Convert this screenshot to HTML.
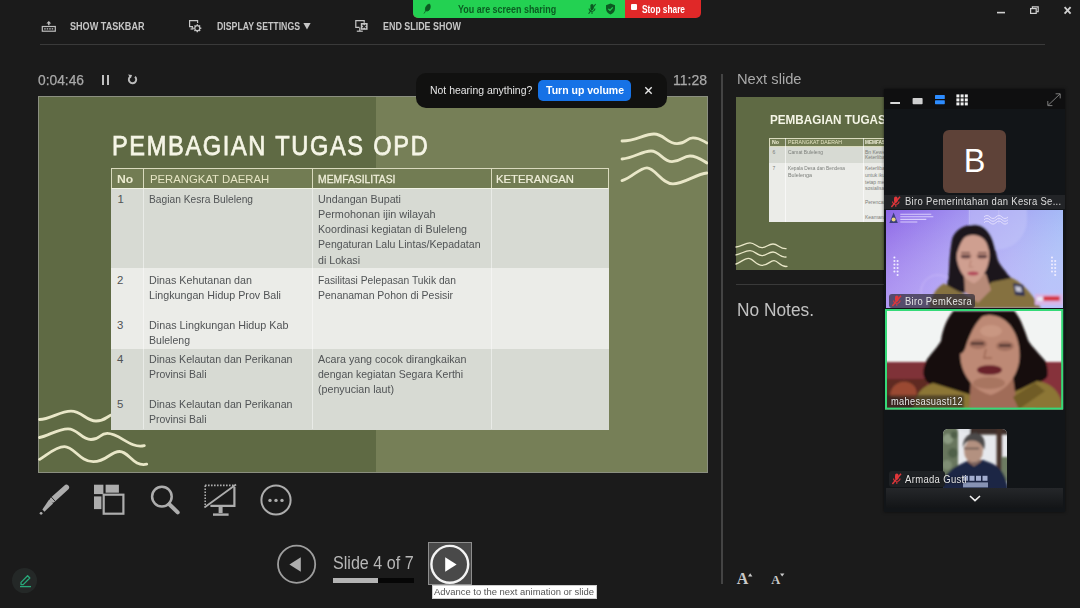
<!DOCTYPE html>
<html lang="id">
<head>
<meta charset="utf-8">
<title>Presenter View</title>
<style>
*{box-sizing:border-box;margin:0;padding:0}
html,body{width:1080px;height:608px;overflow:hidden;background:#1b1b1b}
body{position:relative;font-family:"Liberation Sans",sans-serif;color:#c8c8c8}
.abs{position:absolute}
.t{position:absolute;white-space:nowrap;transform-origin:0 50%}
.tb{font-weight:bold;color:#c6c6c6}
.hr{position:absolute;background:#3a3a3a;height:1px}
.c{color:#505355}
.h{color:#ecebd0}
.n{color:#fff}
</style>
</head>
<body>

<!-- top toolbar -->
<svg class="abs" style="left:40px;top:19px" width="18" height="14" viewBox="40 19 18 14"><rect x="42.300" y="26.500" width="13" height="4.700" fill="none" stroke="#c0c0c0" stroke-width="1.200"/><g fill="#c0c0c0"><rect x="44.200" y="28.200" width="1.500" height="1.300"/><rect x="46.700" y="28.200" width="1.500" height="1.300"/><rect x="49.200" y="28.200" width="1.500" height="1.300"/><rect x="51.700" y="28.200" width="1.500" height="1.300"/><path d="M48.800 21l2.400 2.400h-1.700v1.800h-1.400v-1.800h-1.700z"/></g></svg>
<div class="t" id="t1" style="left:70px;top:18.5px;font-size:11px;line-height:14px;font-weight:bold;color:#c6c6c6;transform:scaleX(0.8256);">SHOW TASKBAR</div>
<svg class="abs" style="left:188px;top:18px" width="14" height="15" viewBox="0 0 14 15"><g fill="none" stroke="#c6c6c6" stroke-width="1.2"><path d="M5 8.600H1.600V2.700h8v2.300"/><path d="M2.500 11h3"/><path d="M4.300 8.600v2.200"/><circle cx="9.300" cy="10.200" r="2.500"/></g><g stroke="#c6c6c6" stroke-width="1.400"><path d="M9.300 6.200v1.200M9.300 13v1.200M5.300 10.200h1.200M12.100 10.200h1.200M6.500 7.400l.9.9M11.200 12.100l.9.9M12.100 7.400l-.9.9M7.400 12.100l-.9.9"/></g></svg>
<div class="t" id="t2" style="left:216.8px;top:18.5px;font-size:11px;line-height:14px;font-weight:bold;color:#c6c6c6;transform:scaleX(0.7940);">DISPLAY SETTINGS</div>
<svg class="abs" style="left:303px;top:22px" width="8" height="8" viewBox="0 0 8 8"><path d="M.4 1h7.200L4 7.400z" fill="#c6c6c6"/></svg>
<svg class="abs" style="left:354px;top:18px" width="15" height="15" viewBox="0 0 15 15"><g fill="none" stroke="#c6c6c6" stroke-width="1.2"><path d="M5.400 9.400H1.800V2.700h8.400v2"/><path d="M2.800 13.200h6"/><path d="M5.800 9.400v3.600"/></g><rect x="6.800" y="5" width="6.800" height="6.800" fill="#c6c6c6"/><path d="M8.500 6.700l3.400 3.400M11.900 6.700l-3.400 3.400" stroke="#1b1b1b" stroke-width="1.300"/></svg>
<div class="t" id="t3" style="left:383px;top:18.5px;font-size:11px;line-height:14px;font-weight:bold;color:#c6c6c6;transform:scaleX(0.8108);">END SLIDE SHOW</div>
<div class="hr" style="left:40px;top:44px;width:1005px"></div>

<!-- window controls -->
<svg class="abs" style="left:990px;top:0" width="90" height="22" viewBox="0 0 90 22"><g stroke="#d0d0d0" fill="none"><path d="M7 12.600h8" stroke-width="1.600"/><rect x="40.600" y="8.600" width="5.600" height="4.800" stroke-width="1.200"/><path d="M42.400 8.400V6.800h5.800v4.800h-1.800" stroke-width="1.200"/><path d="M74.600 7.200l6 6.400M80.600 7.200l-6 6.400" stroke-width="1.800"/></g></svg>

<!-- zoom share bar -->
<div class="abs" style="left:413px;top:0;width:288px;height:17.600px;background:#e02828;border-radius:0 0 5px 5px;overflow:hidden">
  <div class="abs" style="left:0;top:0;width:212px;height:18px;background:#23d152"></div>
  <svg class="abs" style="left:10px;top:3px" width="10" height="12" viewBox="0 0 10 12"><path d="M6.500 1C4 1.500 2 4 2.400 7.200 3.600 8.600 6 8 6.800 6 7.600 4 7.400 2.400 6.500 1zM1 10.500L3.200 7" fill="#0c5a22" stroke="#0c5a22" stroke-width=".8"/></svg>
  <svg class="abs" style="left:174px;top:3px" width="10" height="12" viewBox="0 0 10 12"><g fill="#0c5a22"><rect x="3.400" y="1" width="3.200" height="6" rx="1.600"/><path d="M1.600 5.600c0 4.400 6.800 4.400 6.800 0h-1c0 3.200-4.800 3.200-4.800 0zM4.500 9h1v2h-1z"/></g><path d="M8.600 1L1.600 10.800" stroke="#0c5a22" stroke-width="1.100"/></svg>
  <svg class="abs" style="left:192px;top:3px" width="11" height="12" viewBox="0 0 11 12"><path d="M5.500.6L1 2.200v3.600c0 2.600 1.800 4.600 4.500 5.600C8.200 10.400 10 8.400 10 5.800V2.200z" fill="#0c5a22"/><path d="M3.400 5.800l1.600 1.600 2.800-3" stroke="#23d152" stroke-width="1.200" fill="none"/></svg>
  <div class="abs" style="left:218px;top:4px;width:6px;height:6px;background:#fff;border-radius:1px"></div>
</div>
<div class="t" id="ys" style="left:457.8px;top:2.5px;font-size:10.5px;line-height:13px;font-weight:bold;color:#0b5c22;transform:scaleX(0.8513);">You are screen sharing</div>
<div class="t" id="ss" style="left:642.4px;top:2.5px;font-size:10.5px;line-height:13px;font-weight:bold;color:#fff;transform:scaleX(0.7924);">Stop share</div>

<!-- timer row -->
<div class="t" id="timer" style="left:38px;top:71px;font-size:14.5px;line-height:18px;color:#a9a9a9;-webkit-text-stroke:.25px #a9a9a9;transform:scaleX(0.9506);">0:04:46</div>
<div class="abs" style="left:102px;top:75px;width:2.400px;height:10px;background:#c0c0c0"></div>
<div class="abs" style="left:106.600px;top:75px;width:2.400px;height:10px;background:#c0c0c0"></div>
<svg class="abs" style="left:126px;top:73px" width="13" height="13" viewBox="0 0 13 13"><path d="M9 3.800A3.700 3.700 0 1 1 4.300 3.600" fill="none" stroke="#bcbcbc" stroke-width="1.900"/><path d="M2 1.600L6 2 4.800 5.600z" fill="#bcbcbc"/></svg>
<div class="t" id="clock" style="left:673px;top:71px;font-size:14.5px;line-height:18px;color:#a9a9a9;-webkit-text-stroke:.25px #a9a9a9;transform:scaleX(0.9654);">11:28</div>

<!-- main slide -->
<div class="abs" style="left:37.500px;top:96px;width:670.500px;height:377px;background:#5f6a44;border:1px solid #8b8f80"></div>
<div class="abs" style="left:376px;top:97px;width:331px;height:375px;background:#767f57"></div>
<svg class="abs" style="left:38px;top:96px" width="670" height="377" viewBox="38 96 670 377"><g fill="none" stroke="#e9e7c8" stroke-width="2.800" stroke-linecap="round">
  <path d="M622 141C636 141 644 134 654 134S667 143.600 677 143.600 686 137.800 693 137.800 703 141 707 143"/>
  <path d="M622 159C634 158 642 151 651 151S663 161.700 672 161.700 683 156 690 156 702 160 707 163"/>
  <path d="M622 180.600C632 178 639 167.800 647 167.800S662 183.900 673 183.900 696 174 707 173"/>
  <path d="M39.500 419.500C50 419.500 60 411.200 71 411.200S86 421 96 421 106 416 114 414"/>
  <path d="M39.500 437.500C48 436 58 428.800 68 428.800S81 439.500 91 439.500 99 433.400 107.300 433.400C120 433.400 130 449 144.300 445.600"/>
  <path d="M39.500 459.400C46 456 55 446.600 64.500 446.600S80 461.700 93.300 461.700 110 451.500 119.600 451.500 133 467 146.700 464.200"/>
</g></svg>
<div class="t" id="title" style="left:111.8px;top:129.3px;font-size:27.2px;line-height:34px;color:#f5f5e6;-webkit-text-stroke:0.75px #f5f5e6;letter-spacing:1.9px;word-spacing:0.5px;transform:scaleX(0.8671);">PEMBAGIAN TUGAS OPD</div>

<!-- table -->
<div class="abs" style="left:111px;top:168px;width:498px;height:20px;background:#727c53"></div>
<div class="abs" style="left:111px;top:188px;width:498px;height:80px;background:#d7dad3"></div>
<div class="abs" style="left:111px;top:268px;width:498px;height:81px;background:#ebece8"></div>
<div class="abs" style="left:111px;top:349px;width:498px;height:80.500px;background:#d7dad3"></div>
<div class="abs" style="left:143.300px;top:188px;width:1px;height:241px;background:rgba(255,255,255,.45)"></div>
<div class="abs" style="left:312px;top:188px;width:1px;height:241px;background:rgba(255,255,255,.45)"></div>
<div class="abs" style="left:490.500px;top:188px;width:1px;height:241px;background:rgba(255,255,255,.45)"></div>
<div class="abs" style="left:111px;top:168px;width:498px;height:20.500px;border:1px solid #d9dabd;border-bottom:1.500px solid #f2f3e6"></div>
<div class="abs" style="left:143.300px;top:168px;width:1px;height:20px;background:#d9dabd"></div>
<div class="abs" style="left:312px;top:168px;width:1px;height:20px;background:#d9dabd"></div>
<div class="abs" style="left:490.500px;top:168px;width:1px;height:20px;background:#d9dabd"></div>
<div class="t" id="h1" style="left:116.7px;top:171.7px;font-size:11px;line-height:14px;font-weight:bold;color:#ecebd0;transform:scaleX(1.1042);">No</div>
<div class="t" id="h2" style="left:149.5px;top:171.7px;font-size:11px;line-height:14px;color:#e6e5c4;transform:scaleX(1.0299);">PERANGKAT DAERAH</div>
<div class="t" id="h3" style="left:318px;top:171.7px;font-size:11px;line-height:14px;color:#f0efda;-webkit-text-stroke:0.3px #f0efda;transform:scaleX(0.9415);">MEMFASILITASI</div>
<div class="t" id="h4" style="left:496.2px;top:171.7px;font-size:11px;line-height:14px;color:#f0efda;-webkit-text-stroke:0.2px #f0efda;transform:scaleX(1.0291);">KETERANGAN</div>
<div class="t" id="n1" style="left:117.4px;top:192.1px;font-size:11.4px;line-height:14px;color:#505355;">1</div>
<div class="t" id="n2" style="left:117px;top:272.6px;font-size:11.4px;line-height:14px;color:#505355;">2</div>
<div class="t" id="n3" style="left:117px;top:317.9px;font-size:11.4px;line-height:14px;color:#505355;">3</div>
<div class="t" id="n4" style="left:117px;top:351.9px;font-size:11.4px;line-height:14px;color:#505355;">4</div>
<div class="t" id="n5" style="left:117px;top:397.2px;font-size:11.4px;line-height:14px;color:#505355;">5</div>
<div class="t" id="a1" style="left:149px;top:192.1px;font-size:11.4px;line-height:14px;color:#505355;transform:scaleX(0.8974);">Bagian Kesra Buleleng</div>
<div class="t" id="a2" style="left:149px;top:272.6px;font-size:11.4px;line-height:14px;color:#505355;transform:scaleX(0.9400);">Dinas Kehutanan dan</div>
<div class="t" id="a3" style="left:149px;top:287.7px;font-size:11.4px;line-height:14px;color:#505355;transform:scaleX(0.9390);">Lingkungan Hidup Prov Bali</div>
<div class="t" id="a4" style="left:149px;top:317.9px;font-size:11.4px;line-height:14px;color:#505355;transform:scaleX(0.9454);">Dinas Lingkungan Hidup Kab</div>
<div class="t" id="a5" style="left:149px;top:333px;font-size:11.4px;line-height:14px;color:#505355;transform:scaleX(0.9246);">Buleleng</div>
<div class="t" id="a6" style="left:149px;top:351.9px;font-size:11.4px;line-height:14px;color:#505355;transform:scaleX(0.9325);">Dinas Kelautan dan Perikanan</div>
<div class="t" id="a7" style="left:149px;top:367px;font-size:11.4px;line-height:14px;color:#505355;transform:scaleX(0.9175);">Provinsi Bali</div>
<div class="t" id="a8" style="left:149px;top:397.2px;font-size:11.4px;line-height:14px;color:#505355;transform:scaleX(0.9325);">Dinas Kelautan dan Perikanan</div>
<div class="t" id="a9" style="left:149px;top:412.3px;font-size:11.4px;line-height:14px;color:#505355;transform:scaleX(0.9175);">Provinsi Bali</div>
<div class="t" id="b1" style="left:317.5px;top:192.1px;font-size:11.4px;line-height:14px;color:#505355;transform:scaleX(0.9427);">Undangan Bupati</div>
<div class="t" id="b2" style="left:317.5px;top:207.2px;font-size:11.4px;line-height:14px;color:#505355;transform:scaleX(0.9517);">Permohonan ijin wilayah</div>
<div class="t" id="b3" style="left:317.5px;top:222.3px;font-size:11.4px;line-height:14px;color:#505355;transform:scaleX(0.9336);">Koordinasi kegiatan di Buleleng</div>
<div class="t" id="b4" style="left:317.5px;top:237.4px;font-size:11.4px;line-height:14px;color:#505355;transform:scaleX(0.9263);">Pengaturan Lalu Lintas/Kepadatan</div>
<div class="t" id="b5" style="left:317.5px;top:252.5px;font-size:11.4px;line-height:14px;color:#505355;transform:scaleX(0.9340);">di Lokasi</div>
<div class="t" id="b6" style="left:317.5px;top:272.6px;font-size:11.4px;line-height:14px;color:#505355;transform:scaleX(0.9006);">Fasilitasi Pelepasan Tukik dan</div>
<div class="t" id="b7" style="left:317.5px;top:287.7px;font-size:11.4px;line-height:14px;color:#505355;transform:scaleX(0.9190);">Penanaman Pohon di Pesisir</div>
<div class="t" id="b8" style="left:317.5px;top:351.9px;font-size:11.4px;line-height:14px;color:#505355;transform:scaleX(0.9381);">Acara yang cocok dirangkaikan</div>
<div class="t" id="b9" style="left:317.5px;top:367px;font-size:11.4px;line-height:14px;color:#505355;transform:scaleX(0.9232);">dengan kegiatan Segara Kerthi</div>
<div class="t" id="b10" style="left:317.5px;top:382.1px;font-size:11.4px;line-height:14px;color:#505355;transform:scaleX(0.9375);">(penyucian laut)</div>

<!-- toast -->
<div class="abs" style="left:416px;top:72.500px;width:251px;height:35.500px;background:#111110;border-radius:10px"></div>
<div class="t" id="to1" style="left:429.6px;top:83.2px;font-size:11px;line-height:14px;color:#e6e6e6;transform:scaleX(0.9504);">Not hearing anything?</div>
<div class="abs" style="left:538.400px;top:80px;width:92.600px;height:20.700px;background:#1672e6;border-radius:5px"></div>
<div class="t" id="to2" style="left:545.5px;top:83.7px;font-size:10.5px;line-height:13px;font-weight:bold;color:#fff;transform:scaleX(1.0002);">Turn up volume</div>
<svg class="abs" style="left:644px;top:86px" width="9" height="9" viewBox="0 0 9 9"><path d="M1.300 1.300l6.400 6.400M7.700 1.300L1.300 7.700" stroke="#e8e8e8" stroke-width="1.400"/></svg>

<!-- right column -->
<div class="abs" style="left:721px;top:74px;width:1.500px;height:510px;background:#444"></div>
<div class="t" id="nx" style="left:736.5px;top:70px;font-size:14.5px;line-height:18px;color:#a9a9a9;transform:scaleX(1.0130);">Next slide</div>
<div class="abs" style="left:735.600px;top:97px;width:307px;height:172.700px;background:#5f6a44"></div>
<svg class="abs" style="left:735px;top:238px" width="54" height="32" viewBox="735 238 54 32"><g fill="none" stroke="#e9e7c8" stroke-width="1.300" stroke-linecap="round">
  <path d="M736 247C741 247 745 242.800 750 242.800S757 247.600 762 247.600 768 244 773 244 780 249 786 248.600"/>
  <path d="M736 254.800C741 254 745 250.600 750 250.600S757 255.600 762 255.600 768 252 773 252 780 258 786 257"/>
  <path d="M736 264C740 263 744 258.400 748.500 258.400S756 265.400 762 265.400 770 260.600 774 260.600 781 267.600 787 266.400"/>
</g></svg>
<div class="t" id="nt" style="left:770px;top:112.5px;font-size:12.3px;line-height:15px;color:#f5f5e6;font-weight:bold;transform:scaleX(0.9521);">PEMBAGIAN TUGAS OPD</div>
<div class="abs" style="left:769.400px;top:137.500px;width:229px;height:9.700px;background:#727c53;border:.5px solid #d9dabd"></div>
<div class="abs" style="left:769.400px;top:147.200px;width:229px;height:16.200px;background:#d7dad3"></div>
<div class="abs" style="left:769.400px;top:163.400px;width:229px;height:58.500px;background:#ebece8"></div>
<div class="abs" style="left:784.500px;top:137.500px;width:.6px;height:84.400px;background:rgba(255,255,255,.6)"></div>
<div class="abs" style="left:862.600px;top:137.500px;width:.6px;height:84.400px;background:rgba(255,255,255,.6)"></div>
<div class="t" id="m1" style="left:772px;top:139.4px;font-size:5px;line-height:6px;color:#ecebd0;font-weight:bold;transform:scaleX(1.0492);">No</div>
<div class="t" id="m2" style="left:787.5px;top:139.4px;font-size:5px;line-height:6px;color:#e6e5c4;transform:scaleX(1.0264);">PERANGKAT DAERAH</div>
<div class="t" id="m3" style="left:865px;top:139.4px;font-size:5px;line-height:6px;color:#f0efda;font-weight:bold;transform:scaleX(0.9412);">MEMFASILITASI</div>
<div class="t" id="m4" style="left:772.5px;top:149.3px;font-size:5px;line-height:6px;color:#7b7e7a;">6</div>
<div class="t" id="m5" style="left:787.5px;top:149.3px;font-size:5px;line-height:6px;color:#7b7e7a;transform:scaleX(0.9838);">Camat Buleleng</div>
<div class="t" id="m6" style="left:865px;top:149px;font-size:5px;line-height:6px;color:#7b7e7a;">Bn Kewenangan wilayah</div>
<div class="t" id="m7" style="left:865px;top:153.6px;font-size:5px;line-height:6px;color:#7b7e7a;">Keterlibatan masyarakat</div>
<div class="t" id="m8" style="left:772.5px;top:165px;font-size:5px;line-height:6px;color:#7b7e7a;">7</div>
<div class="t" id="m9" style="left:787.5px;top:165px;font-size:5px;line-height:6px;color:#7b7e7a;transform:scaleX(0.9580);">Kepala Desa dan Bendesa</div>
<div class="t" id="m10" style="left:787.5px;top:171.5px;font-size:5px;line-height:6px;color:#7b7e7a;transform:scaleX(1.0787);">Bulelenga</div>
<div class="t" id="m11" style="left:865px;top:165px;font-size:5px;line-height:6px;color:#7b7e7a;">Keterlibatan masyarakat</div>
<div class="t" id="m12" style="left:865px;top:171.6px;font-size:5px;line-height:6px;color:#7b7e7a;">untuk ikut serta dalam</div>
<div class="t" id="m13" style="left:865px;top:178.5px;font-size:5px;line-height:6px;color:#7b7e7a;">tetap menjaga kebersihan</div>
<div class="t" id="m14" style="left:865px;top:185.4px;font-size:5px;line-height:6px;color:#7b7e7a;">sosialisasi ke warga</div>
<div class="t" id="m15" style="left:865px;top:198.6px;font-size:5px;line-height:6px;color:#7b7e7a;">Perencanaan lokasi</div>
<div class="t" id="m16" style="left:865px;top:213.6px;font-size:5px;line-height:6px;color:#7b7e7a;">Keamanan</div>
<div class="hr" style="left:735.600px;top:284px;width:309px"></div>
<div class="t" id="nn" style="left:736.5px;top:298.5px;font-size:18px;line-height:22px;color:#c2c2c2;transform:scaleX(0.9619);">No Notes.</div>
<div class="t" id="fa" style="left:736.7px;top:568.8px;font-size:16px;line-height:20px;font-family:'Liberation Serif',serif;font-weight:bold;color:#c9c9c9;">A</div>
<svg class="abs" style="left:748px;top:572.800px" width="5" height="4" viewBox="0 0 5 4"><path d="M0 3.500L2.200.3 4.400 3.500z" fill="#c9c9c9"/></svg>
<div class="t" id="fb" style="left:771.3px;top:571.5px;font-size:12.5px;line-height:16px;font-family:'Liberation Serif',serif;font-weight:bold;color:#c9c9c9;">A</div>
<svg class="abs" style="left:780px;top:573px" width="5" height="4" viewBox="0 0 5 4"><path d="M0 .4h4.400L2.200 3.600z" fill="#c9c9c9"/></svg>

<!-- bottom tools -->
<svg class="abs" style="left:36px;top:482px" width="38" height="36" viewBox="36 482 38 36">
  <path d="M66.300 487.500L52.800 499.700" stroke="#adadad" stroke-width="5.600" stroke-linecap="round" fill="none"/>
  <path d="M52.800 499.700L50.700 497.400" stroke="#adadad" stroke-width="0" fill="none"/>
  <path d="M53.100 503.400L49.300 499.200 42.400 509.500 44.400 511.700z" fill="#adadad"/>
  <path d="M55.200 501.300L50.700 496.400" stroke="#1b1b1b" stroke-width=".9"/>
  <circle cx="41.100" cy="513.300" r="1.400" fill="#adadad"/>
</svg>
<svg class="abs" style="left:92px;top:483px" width="34" height="34" viewBox="92 483 34 34">
  <g fill="#adadad"><rect x="94" y="484.700" width="9.400" height="9.400"/><rect x="105.600" y="484.700" width="13.300" height="8"/><rect x="94" y="496.400" width="7.400" height="12.700"/></g>
  <rect x="103.700" y="494.700" width="19.700" height="19" fill="#1b1b1b" stroke="#adadad" stroke-width="2.200"/>
</svg>
<svg class="abs" style="left:148px;top:484px" width="34" height="34" viewBox="148 484 34 34">
  <circle cx="161.900" cy="496.600" r="9.800" fill="none" stroke="#adadad" stroke-width="2.500"/>
  <path d="M169.300 504.200l8.400 8.200" stroke="#adadad" stroke-width="4" stroke-linecap="round"/>
</svg>
<svg class="abs" style="left:202px;top:482px" width="36" height="36" viewBox="202 482 36 36">
  <g stroke="#adadad" fill="none"><path d="M205 485.400h30" stroke-width="1.600" stroke-dasharray="1.600 1.400"/><path d="M205.200 485.400v20" stroke-width="1.600" stroke-dasharray="1.600 1.400"/>
  <path d="M234.400 487v18.800h-24" stroke-width="2.200"/><path d="M236 484.600L204.400 507.400" stroke-width="1.800"/><path d="M220.600 506v7" stroke-width="4"/><path d="M213 514.600h15.600" stroke-width="2.400"/></g>
</svg>
<svg class="abs" style="left:258px;top:482px" width="36" height="36" viewBox="258 482 36 36">
  <circle cx="276" cy="500" r="14.600" fill="none" stroke="#adadad" stroke-width="2"/>
  <g fill="#adadad"><circle cx="270" cy="500.400" r="1.700"/><circle cx="276" cy="500.400" r="1.700"/><circle cx="282" cy="500.400" r="1.700"/></g>
</svg>

<!-- slide navigation -->
<svg class="abs" style="left:274px;top:542px" width="46" height="46" viewBox="274 542 46 46">
  <circle cx="296.600" cy="564.300" r="18.600" fill="none" stroke="#9e9e9e" stroke-width="1.800"/>
  <path d="M300.800 557.300v14.400l-11.400-7.200z" fill="#adadad"/>
</svg>
<div class="t" id="sl" style="left:332.7px;top:552px;font-size:17.6px;line-height:22px;color:#b8b8b8;transform:scaleX(0.9156);">Slide 4 of 7</div>
<div class="abs" style="left:332.700px;top:577.700px;width:81px;height:5.400px;background:#060606"></div>
<div class="abs" style="left:332.700px;top:577.700px;width:45.600px;height:5.400px;background:#b4b4b4"></div>
<div class="abs" style="left:427.700px;top:542.300px;width:44px;height:43px;background:#494949;border:1px solid #8e8e8e"></div>
<svg class="abs" style="left:428px;top:542px" width="46" height="46" viewBox="428 542 46 46">
  <circle cx="449.800" cy="564.300" r="18.400" fill="none" stroke="#f4f4f4" stroke-width="2.400"/>
  <path d="M445.200 557.300v14.400l11.400-7.200z" fill="#fff"/>
</svg>
<div class="abs" style="left:431.700px;top:585px;width:165.600px;height:14px;background:#fff;border:1px solid #cfcfcf"></div>
<div class="t" id="tip" style="left:434.2px;top:586.5px;font-size:9px;line-height:11px;color:#555;transform:scaleX(1.0485);">Advance to the next animation or slide</div>

<!-- annotate badge -->
<div class="abs" style="left:12.400px;top:568px;width:24.600px;height:24.600px;border-radius:12.300px;background:#242827"></div>
<svg class="abs" style="left:17.500px;top:572.600px" width="15" height="15" viewBox="0 0 15 15"><g fill="none" stroke="#28a97a" stroke-width="1.300" stroke-linejoin="round"><path d="M3 9.400L9.600 2.800l2.200 2.200L5.200 11.600H3z"/><path d="M2 13.600h11"/></g></svg>

<!-- zoom video panel -->
<div class="abs" style="left:883.500px;top:89px;width:181.500px;height:423px;background:#121518;box-shadow:0 0 3px rgba(0,0,0,.6)"></div>
<div class="abs" style="left:883.500px;top:89px;width:181.500px;height:20px;background:#0f0f10"></div>
<svg class="abs" style="left:884px;top:90px" width="181" height="19" viewBox="884 90 181 19">
  <rect x="890.300" y="102" width="9.700" height="2" fill="#d8d8d8"/>
  <rect x="912.600" y="98" width="10" height="6.200" rx=".8" fill="#cfcfcf"/>
  <rect x="935" y="95" width="9.800" height="4" rx=".6" fill="#2d8cff"/><rect x="935" y="100.200" width="9.800" height="4" rx=".6" fill="#2d8cff"/>
  <g fill="#f0f0f0"><rect x="956.400" y="94.400" width="3" height="3"/><rect x="960.600" y="94.400" width="3" height="3"/><rect x="964.800" y="94.400" width="3" height="3"/><rect x="956.400" y="98.400" width="3" height="3"/><rect x="960.600" y="98.400" width="3" height="3"/><rect x="964.800" y="98.400" width="3" height="3"/><rect x="956.400" y="102.400" width="3" height="3"/><rect x="960.600" y="102.400" width="3" height="3"/><rect x="964.800" y="102.400" width="3" height="3"/></g>
  <g stroke="#7c7c7c" stroke-width="1" fill="none"><path d="M1048 105.400L1060 94"/><path d="M1055.600 93.800h4.600v4.600"/><path d="M1052.400 105.600h-4.600V101"/></g>
</svg>
<!-- tile 1 -->
<div class="abs" style="left:943.200px;top:129.500px;width:63.200px;height:63px;background:#5e4238;border-radius:6px"></div>
<div class="t" id="av" style="left:963.7px;top:141.2px;font-size:32.5px;line-height:41px;color:#fff;">B</div>
<div class="abs" style="left:884px;top:194.600px;width:180.500px;height:14.400px;background:#222427"></div>
<svg class="abs" style="left:889px;top:195.500px" width="13" height="12" viewBox="0 0 13 12"><g fill="#e0363a"><rect x="5" y=".6" width="3.600" height="6.200" rx="1.800"/><path d="M3 5.400c0 4.600 7.600 4.600 7.600 0h-1.100c0 3.300-5.400 3.300-5.400 0zM6.200 9h1.200v1.800H6.200z"/></g><path d="M11 .8L2.400 11" stroke="#e0363a" stroke-width="1.400"/></svg>
<div class="t" id="nm1" style="left:904.5px;top:194.8px;font-size:10.4px;line-height:13px;color:#dedede;letter-spacing:.35px;transform:scaleX(0.9092);">Biro Pemerintahan dan Kesra Se...</div>

<!-- tile 2 -->
<svg class="abs" style="left:885.700px;top:210.400px" width="177.600" height="98" viewBox="0 0 177.600 98">
  <defs>
    <linearGradient id="g2" x1="0" y1="0" x2="1" y2="0.120"><stop offset="0" stop-color="#8c66e7"/><stop offset=".4" stop-color="#a08ff0"/><stop offset=".75" stop-color="#a8aaf4"/><stop offset="1" stop-color="#a5bbf7"/></linearGradient>
    <linearGradient id="g2b" x1="0" y1="0" x2="0" y2="1"><stop offset="0" stop-color="#fff" stop-opacity="0"/><stop offset="1" stop-color="#d6c8ff" stop-opacity=".45"/></linearGradient>
    <filter id="bl"><feGaussianBlur stdDeviation="1.100"/></filter>
    <filter id="bl2"><feGaussianBlur stdDeviation=".45"/></filter>
    <clipPath id="c2"><rect width="177.600" height="98"/></clipPath>
  </defs>
  <g clip-path="url(#c2)">
  <rect width="177.600" height="98" fill="url(#g2)"/>
  <rect width="177.600" height="98" fill="url(#g2b)"/>
  <g filter="url(#bl)">
    <path d="M83 -2V20A30 30 0 0 0 141 12V-2z" fill="#c3c6fa" opacity=".5"/>
    <circle cx="52" cy="82" r="17" fill="none" stroke="#cdbcf8" stroke-width="1" opacity=".8"/>
    <path d="M87.600 14.800C76 15 67 22 65.700 31.200 64 42 63.500 50 63.200 56.500 63 66 61.500 73 59.800 82L125 84C130 78 133 74 131.400 71.600 124 68 121 64 119.700 61.500 115 56 112 52 111.200 48 109 38 107 28 102.800 22.800 99 17 94 14.600 87.600 14.800z" fill="#1d161a"/>
    <path d="M43 98C45 86 50 78 58 73.500L70 80 86 88 106 72 126 68C136 72 146 84 155 98z" fill="#85713f"/>
    <path d="M78 64L100 64 105 80 92 93 79 82z" fill="#b78a78"/>
    <path d="M70.500 44C70 32 78 25 87 25S103.500 32 103.500 44C103.500 56 98 68 88 73.500 78 70 70.500 58 70.500 44z" fill="#cf9f90"/>
    <path d="M89 19C80 23 73 32 70 48 67 36 70 24 80 17zM89 19C97 23 102 32 104.500 48 108 36 105 24 96 17z" fill="#1d161a"/>
    <ellipse cx="87" cy="63.500" rx="5.500" ry="1.900" fill="#b2485a"/>
    <ellipse cx="80" cy="46" rx="6" ry="3.500" fill="#9c6c60" opacity=".55"/><ellipse cx="96" cy="46" rx="6" ry="3.500" fill="#9c6c60" opacity=".55"/><path d="M75.500 46.500h8.500M92 46.500h8.500" stroke="#35202a" stroke-width="2"/><path d="M75 42.500h9M92 42.500h9" stroke="#5a3a38" stroke-width="1"/>
    <path d="M85 50l-1.500 7h4" stroke="#b88474" stroke-width="1.200" fill="none"/>
    <path d="M127 73l10 2 2 11-10-1z" fill="#2b2f52"/>
    <path d="M129 76l6 1 1 5-6-.5z" fill="#c8c8d8"/>
    <rect x="149" y="84" width="28" height="11" fill="#d9b6e6"/>
    <rect x="157" y="86" width="17" height="5" rx="2" fill="#d43a4a"/>
    <rect x="151" y="87" width="6" height="4" rx="1" fill="#e8e8f6"/>
  </g>
  <g filter="url(#bl2)">
    <path d="M3.400 13l4.200-10.500L11.800 13z" fill="#3a3f7a"/><circle cx="7.600" cy="9.600" r="2" fill="#e8d080"/>
    <g stroke="#e4dbff" stroke-width="1.100" opacity=".85"><path d="M14.300 4.200h31M14.300 6.800h33M14.300 9.400h26M14.300 12h17"/></g>
    <g stroke="#ece8ff" stroke-width=".9" fill="none" opacity=".9"><path d="M98 7c2-2 4-2 6 0s4 2 6 0 4-2 6 0 4 2 6 0M98 9.800c2-2 4-2 6 0s4 2 6 0 4-2 6 0 4 2 6 0M98 12.600c2-2 4-2 6 0s4 2 6 0 4-2 6 0 4 2 6 0"/></g>
    <g stroke="#d8d4fb" stroke-width=".5" opacity=".7"><path d="M83.400 0v14M112.800 0v14"/></g>
    <g fill="#f0ecff"><circle cx="8.400" cy="47.500" r="1.050"/><circle cx="8.400" cy="51" r="1.050"/><circle cx="8.400" cy="54.500" r="1.050"/><circle cx="8.400" cy="58" r="1.050"/><circle cx="8.400" cy="61.500" r="1.050"/><circle cx="11.600" cy="51" r="1.050"/><circle cx="11.600" cy="54.500" r="1.050"/><circle cx="11.600" cy="58" r="1.050"/><circle cx="11.600" cy="61.500" r="1.050"/><circle cx="11.600" cy="65" r="1.050"/>
    <circle cx="166" cy="47.500" r="1.050"/><circle cx="166" cy="51" r="1.050"/><circle cx="166" cy="54.500" r="1.050"/><circle cx="166" cy="58" r="1.050"/><circle cx="166" cy="61.500" r="1.050"/><circle cx="169.200" cy="51" r="1.050"/><circle cx="169.200" cy="54.500" r="1.050"/><circle cx="169.200" cy="58" r="1.050"/><circle cx="169.200" cy="61.500" r="1.050"/><circle cx="169.200" cy="65" r="1.050"/></g>
  </g>
  </g>
</svg>
<div class="abs" style="left:888.500px;top:294.300px;width:86px;height:13.600px;background:rgba(48,44,56,.72);border-radius:3px"></div>
<svg class="abs" style="left:890px;top:295.300px" width="13" height="12" viewBox="0 0 13 12"><g fill="#e0363a"><rect x="5" y=".6" width="3.600" height="6.200" rx="1.800"/><path d="M3 5.400c0 4.600 7.600 4.600 7.600 0h-1.100c0 3.300-5.400 3.300-5.400 0zM6.200 9h1.200v1.800H6.200z"/></g><path d="M11 .8L2.400 11" stroke="#e0363a" stroke-width="1.400"/></svg>
<div class="t" id="nm2" style="left:905.1px;top:294.7px;font-size:10.4px;line-height:13px;color:#e6e6e6;letter-spacing:.35px;transform:scaleX(0.9001);">Biro PemKesra</div>

<!-- tile 3 -->
<svg class="abs" style="left:885.400px;top:309px" width="178.200" height="100.600" viewBox="0 0 178.200 100.600">
  <defs><clipPath id="c3"><rect width="178.200" height="100.600"/></clipPath></defs>
  <g clip-path="url(#c3)">
  <rect width="178.200" height="100.600" fill="#f2f4f3"/>
  <g filter="url(#bl)">
    <rect x="-4" y="53" width="60" height="52" fill="#7f3038"/>
    <rect x="-4" y="70" width="46" height="34" fill="#5e2a24"/>
    <rect x="150" y="53" width="32" height="50" fill="#86323a"/>
    <path d="M5 88c0-10 8-17 17-15s11 9 9 17z" fill="#9a4a32"/>
    <path d="M68.300 2C60 12 57 24 56 32 50 42 42 48 40.400 54.400 38 60 38 64 38.700 66.600 40 72 44 76 49.200 78L60 96 150 96 152 74C158 72 162 70 162.500 66.600 163 60 162 56 160.700 52.600 154 44 147 38 143.300 31.700 140 22 136 10 129.400 2z" fill="#17110f"/>
    <path d="M28 100.600C30 86 36 78 48 74L80 84 106 92 136 80 152 72C166 74 176 82 178 100.600z" fill="#8c7636"/>
    <path d="M86 68L128 68 133 104H84z" fill="#a06c58"/>
    <path d="M75.300 46C75 28 84 8 104 6 124 6 134.600 26 134.600 46 134.600 64 124 80 106 86 88 82 75.300 64 75.300 46z" fill="#bd8974"/>
    <path d="M68 2L104 2C94 8 86 20 80 40 74 52 70 40 68 2z" fill="#17110f"/>
    <path d="M112 2C124 6 132 16 136 34 140 24 138 10 128 2z" fill="#17110f"/>
    <ellipse cx="106" cy="22" rx="11" ry="6" fill="#d0a08c" opacity=".6"/>
    <ellipse cx="104.500" cy="61" rx="12.500" ry="4.800" fill="#6a222c"/>
    <ellipse cx="93" cy="35" rx="9" ry="5" fill="#8a5a4c" opacity=".55"/><ellipse cx="120" cy="37" rx="9" ry="5" fill="#8a5a4c" opacity=".55"/><path d="M86 34.500h13M114 36.500h12" stroke="#3a2224" stroke-width="2"/><ellipse cx="104" cy="74" rx="16" ry="6" fill="#9a6654" opacity=".6"/>
    <path d="M101 40l-2 9h8" stroke="#9c6654" stroke-width="1.400" fill="none"/>
    <path d="M128 88l22-14 10 8-26 18z" fill="#6f5c26"/>
    <rect x="1" y="86" width="78" height="14" fill="#2a2320" opacity=".55"/>
  </g>
  </g>
  <rect x="1" y="1" width="176.200" height="98.600" fill="none" stroke="#36da78" stroke-width="2"/>
</svg>
<div class="t" id="nm3" style="left:890.7px;top:394.7px;font-size:10.4px;line-height:13px;color:#ececec;letter-spacing:.35px;text-shadow:0 0 2px rgba(0,0,0,.8);transform:scaleX(0.8935);">mahesasuasti12</div>

<!-- tile 4 -->
<svg class="abs" style="left:943px;top:428.600px" width="64" height="59.200" viewBox="0 0 64 59.200">
  <defs><clipPath id="c4"><path d="M5 0H59a5 5 0 0 1 5 5V59.200H0V5a5 5 0 0 1 5-5z"/></clipPath><filter id="bl3"><feGaussianBlur stdDeviation=".8"/></filter></defs>
  <g clip-path="url(#c4)">
  <rect width="64" height="59.200" fill="#e7e9ed"/>
  <g filter="url(#bl3)">
    <rect x="-2" y="-2" width="17" height="64" fill="#67765d"/>
    <circle cx="5" cy="10" r="5" fill="#8c9b82"/><circle cx="10" cy="24" r="5" fill="#50604a"/><circle cx="4" cy="36" r="5" fill="#7f8e74"/><circle cx="11" cy="6" r="3.500" fill="#4f5e48"/>
    <path d="M14 0C18 2 22 4 27 4V-2H14z" fill="#dfe2e6"/>
    <rect x="27" y="-2" width="40" height="7.600" fill="#3d2e2a"/>
    <rect x="53.600" y="-2" width="5.200" height="64" fill="#46322b"/>
    <rect x="58.600" y="28" width="8" height="24" fill="#6d7c62"/>
    <path d="M-2 62C0 48 6 40 18 35L26 31 40 31 48 34C58 38 63 46 66 62z" fill="#1f2744"/>
    <ellipse cx="30.500" cy="22" rx="9.400" ry="11.800" fill="#b39180"/>
    <path d="M20 19C19 9 26 3.500 33 4 40 5 43.500 12 41 21 38 13 32 10.500 26 12 22 13 21 16 20 19z" fill="#4c4a48"/>
    <path d="M21 19.500h15" stroke="#3a3030" stroke-width="1.200"/>
    <path d="M25 32l6 4 7-4.500" stroke="#8e6e60" stroke-width="2" fill="none"/>
  </g>
  <g filter="url(#bl2)" fill="#a3aed0"><rect x="20" y="46.800" width="5" height="5"/><rect x="26.500" y="46.800" width="5" height="5"/><rect x="33" y="46.800" width="5" height="5"/><rect x="39.500" y="46.800" width="5" height="5"/><rect x="20" y="53.400" width="25" height="5" opacity=".8"/></g>
  </g>
</svg>
<div class="abs" style="left:888.500px;top:470.600px;width:56px;height:16.400px;background:#1e2124;border-radius:3px"></div>
<svg class="abs" style="left:890px;top:473px" width="13" height="12" viewBox="0 0 13 12"><g fill="#e0363a"><rect x="5" y=".6" width="3.600" height="6.200" rx="1.800"/><path d="M3 5.400c0 4.600 7.600 4.600 7.600 0h-1.100c0 3.300-5.400 3.300-5.400 0zM6.200 9h1.200v1.800H6.200z"/></g><path d="M11 .8L2.400 11" stroke="#e0363a" stroke-width="1.400"/></svg>
<div class="t" id="nm4" style="left:905.1px;top:472.5px;font-size:10.4px;line-height:13px;color:#e6e6e6;letter-spacing:.35px;text-shadow:0 0 2px rgba(0,0,0,.9);transform:scaleX(0.9153);">Armada Gusti</div>
<div class="abs" style="left:886px;top:488px;width:177px;height:20px;background:linear-gradient(#25272a,#131517)"></div>
<svg class="abs" style="left:968px;top:494px" width="14" height="9" viewBox="0 0 14 9"><path d="M2 2l5 4.600L12 2" fill="none" stroke="#f0f0f0" stroke-width="1.600"/></svg>

</body>
</html>
